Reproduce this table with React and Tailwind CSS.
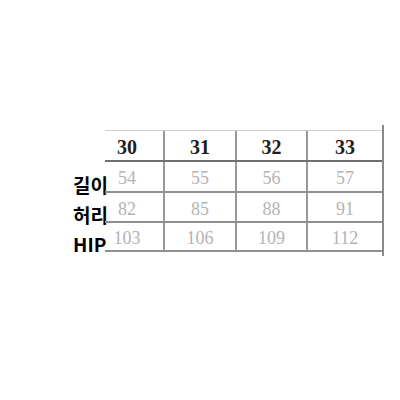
const heads = ['30', '31', '32', '33'];
const rows = [
    { label: '길이', values: ['54', '55', '56', '57'], h: 'h-[31px]' },
    { label: '허리', values: ['82', '85', '88', '91'], h: 'h-[30px]' },
    { label: 'HIP', values: ['103', '106', '109', '112'], h: 'h-[29px]' },
];
const colW = ['w-[60px] pr-[14px]', 'w-[72px]', 'w-[71px]', 'w-[74px]'];

const App = () => {
    return (
        <div className="w-[400px] h-[400px] bg-white pt-[125px] pl-[73px]">
            <div className="flex">
                {/* 왼쪽 라벨 */}
                <div className="flex flex-col w-[32px] pt-[39px] font-['Noto_Sans_CJK_KR','Noto_Sans',sans-serif] font-bold text-[19px] text-black">
                    {rows.map((r) => (
                        <div key={r.label} className={`${r.h} flex items-end leading-[20px] whitespace-nowrap`}>{r.label}</div>
                    ))}
                </div>

                {/* 사이즈 표 */}
                <div className="border-r-2 border-[#8a8a8a] pt-[5px] pb-[4px] font-['Liberation_Serif',serif]">
                    <div className="flex h-[32px] border-t border-[#cfcfcf] border-b-2 border-b-[#6f6f6f]">
                        {heads.map((v, i) => (
                            <div key={v} className={`${colW[i]} ${i < 3 ? 'border-r-2 border-[#999]' : ''} flex items-center justify-center text-[20px] font-bold text-[#1e1e1e] pt-[2px]`}>{v}</div>
                        ))}
                    </div>
                    {rows.map((r) => (
                        <div key={r.label} className={`flex ${r.h} border-b-2 border-[#8f8f8f]`}>
                            {r.values.map((v, i) => (
                                <div key={v} className={`${colW[i]} ${i < 3 ? 'border-r-2 border-[#999]' : ''} flex items-center justify-center text-[18px] text-[#b3b3b3] pt-[4px]`}>{v}</div>
                            ))}
                        </div>
                    ))}
                </div>
            </div>
        </div>
    );
};

export default App;
